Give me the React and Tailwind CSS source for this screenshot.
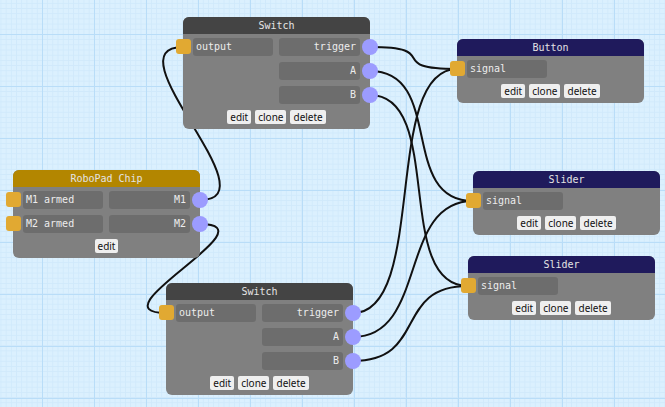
import { useState } from 'react'

const nodes = [
  {
    id: 'sw1',
    title: 'Switch',
    pos: 'left-[183px] top-[17px]',
    head: 'bg-[#444444]',
    rows: [['output', 'trigger'], [null, 'A'], [null, 'B']],
    buttons: ['edit', 'clone', 'delete'],
  },
  {
    id: 'chip',
    title: 'RoboPad Chip',
    pos: 'left-[13px] top-[170px]',
    head: 'bg-[#b38600]',
    rows: [['M1 armed', 'M1'], ['M2 armed', 'M2']],
    buttons: ['edit'],
  },
  {
    id: 'btn',
    title: 'Button',
    pos: 'left-[457px] top-[39px]',
    head: 'bg-[#1f1a5c]',
    rows: [['signal', null]],
    buttons: ['edit', 'clone', 'delete'],
  },
  {
    id: 'sl1',
    title: 'Slider',
    pos: 'left-[473px] top-[171px]',
    head: 'bg-[#1f1a5c]',
    rows: [['signal', null]],
    buttons: ['edit', 'clone', 'delete'],
  },
  {
    id: 'sl2',
    title: 'Slider',
    pos: 'left-[468px] top-[256px]',
    head: 'bg-[#1f1a5c]',
    rows: [['signal', null]],
    buttons: ['edit', 'clone', 'delete'],
  },
  {
    id: 'sw2',
    title: 'Switch',
    pos: 'left-[166px] top-[283px]',
    head: 'bg-[#444444]',
    rows: [['output', 'trigger'], [null, 'A'], [null, 'B']],
    buttons: ['edit', 'clone', 'delete'],
  },
]

// wire endpoints: [from (output circle), to (input square)]
const wires = [
  [[200, 200], [183, 47]],
  [[200, 224], [166, 313]],
  [[370, 47], [457, 69]],
  [[370, 71], [473, 201]],
  [[370, 95], [468, 286]],
  [[353, 313], [457, 69]],
  [[353, 337], [473, 201]],
  [[353, 361], [468, 286]],
]

function wirePath([[x1, y1], [x2, y2]]) {
  const k = 75
  return `M ${x1} ${y1} C ${x1 + k} ${y1}, ${x2 - k} ${y2}, ${x2} ${y2}`
}

function Row({ left, right }) {
  return (
    <div className="relative flex h-[18px] gap-[6px] px-[10px]">
      {left ? (
        <>
          <span className="absolute left-[-7px] top-[1px] h-[15px] w-[15px] rounded-[3px] bg-[#e1a932]" />
          <div className="w-[80px] truncate rounded-[3px] bg-[#6d6d6d] pl-[3px] text-[10px] leading-[18px] text-[#ececec]">
            {left}
          </div>
        </>
      ) : (
        <div className="w-[80px]" />
      )}
      {right && (
        <>
          <div className="flex-1 rounded-[3px] bg-[#6d6d6d] pr-[4px] text-right text-[10px] leading-[18px] text-[#ececec]">
            {right}
          </div>
          <span className="absolute right-[-8px] top-[1px] h-[16px] w-[16px] rounded-full bg-[#9c9cff]" />
        </>
      )}
    </div>
  )
}

function Node({ node }) {
  return (
    <div className={`absolute w-[187px] rounded-[6px] bg-[#808080] pb-[5px] font-['DejaVu_Sans_Mono',monospace] ${node.pos}`}>
      <div className={`h-[17px] rounded-t-[6px] text-center text-[10px] leading-[17px] text-[#e4e4e4] ${node.head}`}>
        {node.title}
      </div>
      <div className="flex flex-col gap-[6px] pt-[4px]">
        {node.rows.map((r, i) => (
          <Row key={i} left={r[0]} right={r[1]} />
        ))}
        <div className="flex justify-center gap-[4px] font-['Noto_Sans',sans-serif]">
          {node.buttons.map(b => (
            <button
              key={b}
              className="h-[14px] rounded-[2px] bg-[#efefef] px-[3px] text-[10px] leading-[14px] text-[#111111]"
            >
              {b}
            </button>
          ))}
        </div>
      </div>
    </div>
  )
}

export default function App() {
  const [items] = useState(nodes)
  return (
    <div className="relative h-[407px] w-[665px] overflow-hidden bg-[#dbf0fe] bg-[linear-gradient(#b9ddf8_1px,transparent_1px),linear-gradient(90deg,#b9ddf8_1px,transparent_1px),linear-gradient(#d0e9fb_1px,transparent_1px),linear-gradient(90deg,#d0e9fb_1px,transparent_1px)] bg-[size:52px_52px,52px_52px,5.2px_5.2px,5.2px_5.2px] bg-[position:42px_34px,42px_34px,42px_34px,42px_34px]">
      <svg className="absolute inset-0" width="665" height="407">
        {wires.map((w, i) => (
          <path key={i} d={wirePath(w)} fill="none" stroke="#111111" strokeWidth="2" />
        ))}
      </svg>
      {items.map(n => (
        <Node key={n.id} node={n} />
      ))}
    </div>
  )
}
